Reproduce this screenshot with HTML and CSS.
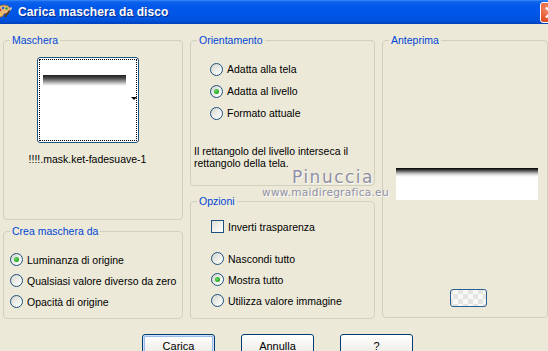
FILE: index.html
```html
<!DOCTYPE html>
<html lang="it">
<head>
<meta charset="utf-8">
<title>Carica maschera da disco</title>
<link rel="stylesheet" href="styles.css">
</head>
<body>
<div class="window">
  <div class="titlebar">
    <svg class="appicon" width="16" height="16" viewBox="0 0 16 16">
      <path d="M8 2 C3 2 0 5 0 9 C0 12 2 14 5 14 C7 14 7 12 8 11 C9 10 11 11 12 10 C14 9 15 7 14 5 C13 3 11 2 8 2 Z" fill="#E8B878" stroke="#8A5A2A" stroke-width="0.8"/>
      <circle cx="4" cy="7" r="1.3" fill="#D42A1A"/>
      <circle cx="7" cy="5" r="1.3" fill="#2A5AD4"/>
      <circle cx="10.5" cy="5.5" r="1.2" fill="#2AA02A"/>
      <circle cx="4" cy="11" r="1.2" fill="#F2D23A"/>
      <path d="M9 14 L14 7" stroke="#5A3A1A" stroke-width="1.6"/>
      <path d="M13.5 7.5 L15.5 4.5" stroke="#C0C0C0" stroke-width="1.6"/>
    </svg>
    <span class="title">Carica maschera da disco</span>
    <div class="close">
      <svg width="21" height="21" viewBox="0 0 21 21"><path d="M6 6 L15 15 M15 6 L6 15" stroke="#fff" stroke-width="2.2" stroke-linecap="square"/></svg>
    </div>
  </div>

  <div class="content">
    <div class="panels">
      <div class="col">
        <div class="group g-maschera">
          <span class="legend">Maschera</span>
          <div class="thumb">
            <div class="thumb-inner">
              <div class="mask-bar"></div>
              <span class="drop-arrow"></span>
            </div>
          </div>
          <div class="filename">!!!!.mask.ket-fadesuave-1</div>
        </div>
        <div class="group g-crea">
          <span class="legend">Crea maschera da</span>
          <div class="row"><span class="radio on"></span><span>Luminanza di origine</span></div>
          <div class="row"><span class="radio"></span><span>Qualsiasi valore diverso da zero</span></div>
          <div class="row"><span class="radio"></span><span>Opacità di origine</span></div>
        </div>
      </div>

      <div class="col">
        <div class="group g-orient">
          <span class="legend">Orientamento</span>
          <div class="opts">
            <div class="row r22"><span class="radio"></span><span>Adatta alla tela</span></div>
            <div class="row r22"><span class="radio on"></span><span>Adatta al livello</span></div>
            <div class="row r22"><span class="radio"></span><span>Formato attuale</span></div>
          </div>
          <p class="desc">Il rettangolo del livello interseca il rettangolo della tela.</p>
        </div>
        <div class="group g-opzioni">
          <span class="legend">Opzioni</span>
          <div class="row"><span class="check"></span><span>Inverti trasparenza</span></div>
          <div class="radios">
            <div class="row"><span class="radio"></span><span>Nascondi tutto</span></div>
            <div class="row"><span class="radio on"></span><span>Mostra tutto</span></div>
            <div class="row"><span class="radio"></span><span>Utilizza valore immagine</span></div>
          </div>
        </div>
      </div>

      <div class="group g-ante">
        <span class="legend">Anteprima</span>
        <div class="preview"></div>
        <div class="mini-btn"></div>
      </div>
    </div>

    <div class="buttons">
      <button class="btn default">Carica</button>
      <button class="btn">Annulla</button>
      <button class="btn">?</button>
    </div>
  </div>

  <div class="wm wm-name">Pinuccia</div>
  <div class="wm wm-url">www.maidiregrafica.eu</div>
</div>
</body>
</html>
```

FILE: styles.css
```css
* { box-sizing: border-box; }

html, body {
  margin: 0;
  padding: 0;
  background: #ECE9D8;
}

.window {
  position: relative;
  width: 548px;
  height: 351px;
  overflow: hidden;
  background: #ECE9D8;
  font-family: "Liberation Sans", Arial, sans-serif;
  font-size: 10.5px;
  color: #000;
}

/* Title bar */
.titlebar {
  height: 24px;
  display: flex;
  align-items: center;
  background: linear-gradient(#3A88F8 0%, #0C62EC 8%, #0058EA 30%, #0056E6 60%, #0052DC 85%, #0040BC 100%);
  overflow: hidden;
}

.appicon {
  margin-left: -4px;
  margin-top: -2px;
  flex: none;
}

.title {
  margin-left: 6px;
  color: #fff;
  font-weight: bold;
  font-size: 12px;
  letter-spacing: 0.1px;
  text-shadow: 1px 1px 0 #0A2A8A;
}

.close {
  margin-left: auto;
  margin-right: -14px;
  width: 22px;
  height: 21px;
  margin-top: 1px;
  border: 1px solid #fff;
  border-radius: 3px;
  background: radial-gradient(circle at 30% 30%, #F28B6A 0%, #E2552C 55%, #C8401C 100%);
  display: flex;
  align-items: center;
  justify-content: center;
}

.content {
  padding: 16px 0 0 3px;
}

.panels {
  display: grid;
  grid-template-columns: 180px 185px 166px;
  column-gap: 7px;
  align-items: start;
}

.col {
  display: flex;
  flex-direction: column;
}

.group {
  position: relative;
  border: 1px solid #D0D0BF;
  border-radius: 4px;
}

.legend {
  position: absolute;
  top: -7px;
  left: 6px;
  padding: 0 2px;
  line-height: 13px;
  background: #ECE9D8;
  color: #0046D5;
  white-space: nowrap;
}

/* Maschera */
.g-maschera {
  height: 180px;
  display: flex;
  flex-direction: column;
  align-items: center;
  padding: 16px 11px 0 0;
}

.thumb {
  width: 102px;
  height: 86px;
  border: 1px solid #1C5180;
  border-radius: 3px;
  background: #fff;
  padding: 1px;
}

.thumb-inner {
  position: relative;
  width: 100%;
  height: 100%;
  border: 1px dotted #000;
  padding: 15px 0 0 3px;
}

.mask-bar {
  width: 83px;
  height: 11px;
  background: linear-gradient(#1E1E1E 0%, #4A4A4A 30%, #9A9A9A 60%, #E0E0E0 85%, #FFFFFF 100%);
}

.drop-arrow {
  position: absolute;
  left: 91px;
  top: 37px;
  width: 0;
  height: 0;
  border-left: 3px solid transparent;
  border-right: 3px solid transparent;
  border-top: 3px solid #000;
}

.filename {
  margin-top: 10px;
  line-height: 13px;
  font-size: 10.5px;
  white-space: nowrap;
}

/* rows */
.row {
  display: flex;
  align-items: center;
  gap: 4px;
  height: 21px;
  white-space: nowrap;
}

.row.r22 { height: 22px; }

.radio {
  position: relative;
  flex: none;
  width: 13px;
  height: 13px;
  border-radius: 50%;
  border: 1px solid #1C5180;
  background: linear-gradient(135deg, #D4D4CC 0%, #EDEDE8 50%, #FFFFFF 100%);
}

.radio.on::after {
  content: "";
  position: absolute;
  left: 3px;
  top: 3px;
  width: 5px;
  height: 5px;
  border-radius: 50%;
  background: radial-gradient(circle at 40% 40%, #6FE06F 0%, #2DB22D 50%, #1A8C1A 100%);
}

.check {
  flex: none;
  width: 13px;
  height: 13px;
  border: 1px solid #1C5180;
  background: linear-gradient(135deg, #DCDCD7 0%, #F2F2EE 55%, #FFFFFF 100%);
}

/* Crea maschera */
.g-crea {
  margin-top: 11px;
  height: 88px;
  padding: 17px 0 0 6px;
}

/* Orientamento */
.g-orient {
  height: 146px;
  padding: 17px 0 0 3px;
}

.g-orient .opts {
  padding-left: 16px;
}

.desc {
  margin: 21px 0 0 0;
  line-height: 12px;
  width: 175px;
}

/* Opzioni */
.g-opzioni {
  margin-top: 15px;
  height: 118px;
  padding: 14px 0 0 20px;
}

.g-opzioni .radios {
  margin-top: 11px;
}

/* Anteprima */
.g-ante {
  height: 278px;
  display: flex;
  flex-direction: column;
  align-items: flex-start;
}

.preview {
  margin: 127px 0 0 13px;
  width: 142px;
  height: 32px;
  background: linear-gradient(#000 0px, #3A3A3A 2px, #8A8A8A 4px, #D2D2D2 6px, #F4F4F4 8px, #FFFFFF 9px);
}

.mini-btn {
  margin: 89px 0 0 67px;
  width: 37px;
  height: 18px;
  border: 1px solid #2B5E91;
  border-radius: 3px;
  background:
    conic-gradient(#E4E4E0 25%, #F8F8F6 0 50%, #E4E4E0 0 75%, #F8F8F6 0) 7px 4px / 10px 10px;
  background-color: #F4F4F2;
}

/* Buttons */
.buttons {
  display: flex;
  gap: 26px;
  margin: 15px 0 0 139px;
}

.btn {
  width: 73px;
  height: 23px;
  padding: 0;
  border: 1px solid #003C74;
  border-radius: 3px;
  background: linear-gradient(#FFFFFF 0%, #F5F4F0 50%, #ECEBE5 85%, #D8D2C6 100%);
  font-family: "Liberation Sans", Arial, sans-serif;
  font-size: 11px;
  color: #000;
}

.btn.default {
  box-shadow: inset 0 0 0 1px #CFE0FA, inset 0 0 0 2px #9BB9EA;
}

/* Watermark */
.wm {
  position: absolute;
  white-space: nowrap;
  color: #9090A6;
  text-shadow: 1px 1px 0 rgba(255, 255, 255, 0.85);
  font-family: "DejaVu Sans", sans-serif;
  line-height: 1;
}

.wm-name {
  left: 292px;
  top: 169px;
  font-size: 17px;
  letter-spacing: 1.5px;
}

.wm-url {
  left: 262px;
  top: 187px;
  font-size: 10.5px;
  letter-spacing: 0.3px;
}
```
